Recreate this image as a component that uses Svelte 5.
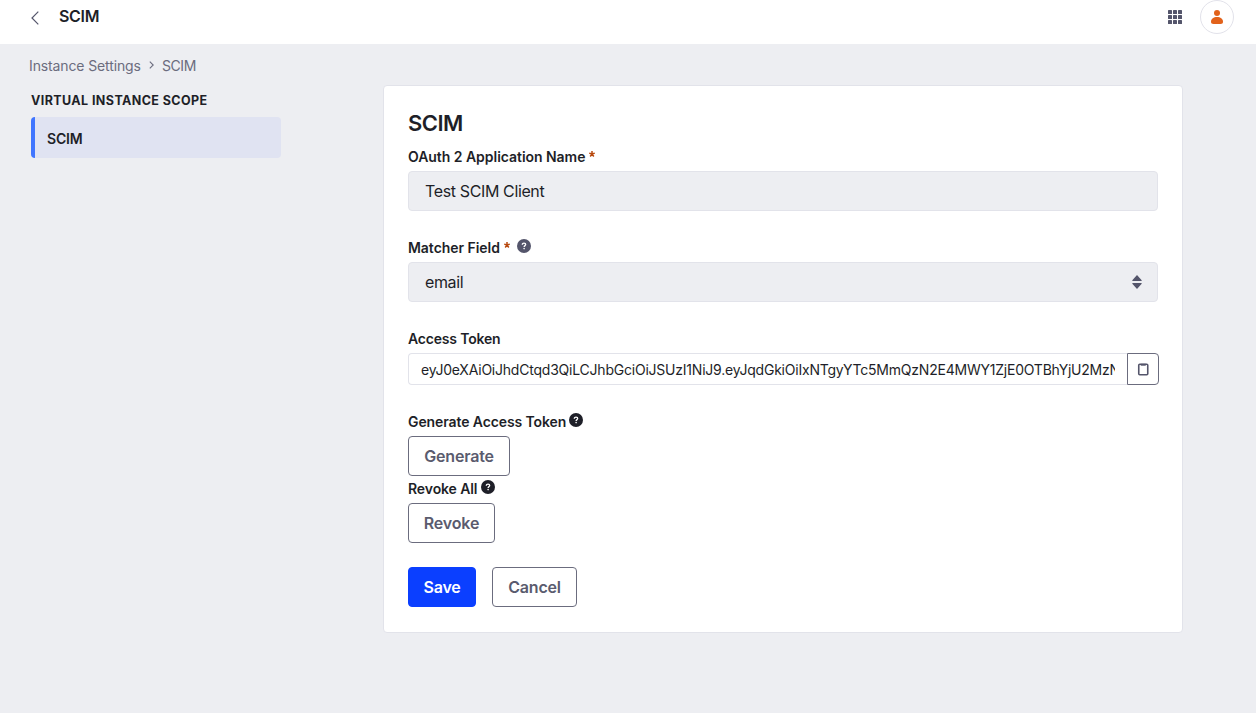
<script>
  const token = 'eyJ0eXAiOiJhdCtqd3QiLCJhbGciOiJSUzI1NiJ9.eyJqdGkiOiIxNTgyYTc5MmQzN2E4MWY1ZjE0OTBhYjU2MzNh';
  const cells = [0, 5, 10];
</script>

{#snippet help()}
  <svg class="help" viewBox="0 0 14 14" aria-hidden="true">
    <circle cx="7" cy="7" r="7" fill="currentColor" />
    <path d="M5.300 5.700C5.300 4.600 6 4.200 7 4.200s1.700.5 1.700 1.300C8.700 6.700 7.100 6.600 7.100 8" fill="none" stroke="#fff" stroke-width="1.300" />
    <circle cx="7.1" cy="9.6" r=".8" fill="#fff" />
  </svg>
{/snippet}

{#snippet star()}
  <svg class="star" viewBox="0 0 6 6" aria-hidden="true">
    <path d="M3 0v3M.2 2.100 3 3l2.800-.9M1.200 5.500 3 3l1.800 2.500" fill="none" stroke="#b84a10" stroke-width="1.5" />
  </svg>
{/snippet}

<div class="page">
  <header>
    <svg class="back" viewBox="0 0 8 14"><path d="M7.300.7 1 7l6.300 6.300" fill="none" stroke="#54556b" stroke-width="1.2" /></svg>
    <h1>SCIM</h1>
    <svg class="apps" viewBox="0 0 14 14">
      {#each cells as y}
        {#each cells as x}
          <rect {x} {y} width="4" height="4" rx=".6" fill="#54556b" />
        {/each}
      {/each}
    </svg>
    <div class="avatar">
      <svg viewBox="0 0 12 14"><circle cx="6" cy="3" r="3" fill="#e2621b" /><path d="M0 11.500C0 8.900 2.600 7 6 7s6 1.900 6 4.500c0 1.800-.8 2.500-2.500 2.500h-7C.8 14 0 13.300 0 11.500Z" fill="#e2621b" /></svg>
    </div>
  </header>

  <nav class="crumbs">
    <span class="crumb">Instance Settings</span>
    <svg viewBox="0 0 5 8"><path d="m.8.6 3.400 3.400L.8 7.400" fill="none" stroke="#6b6c7e" stroke-width="1.100" /></svg>
    <span class="current">SCIM</span>
  </nav>

  <div class="body">
    <aside>
      <h2>VIRTUAL INSTANCE SCOPE</h2>
      <div class="active"><span>SCIM</span></div>
    </aside>

    <main>
      <h3>SCIM</h3>
      <div class="label"><span class="l-app">OAuth 2 Application Name</span>{@render star()}</div>
      <div class="field"><span>Test SCIM Client</span></div>

      <div class="label spaced"><span class="l-match">Matcher Field</span>{@render star()}<span class="muted">{@render help()}</span></div>
      <div class="field select">
        <span>email</span>
        <svg viewBox="0 0 10 14"><path d="M5 0 .3 5.300q-.3.700.5.700h8.400q.8 0 .5-.7ZM5 14 .3 8.700Q0 8 .8 8h8.400q.8 0 .5.700Z" fill="#54556b" /></svg>
      </div>

      <div class="label spaced"><span class="l-token">Access Token</span></div>
      <div class="token">
        <div class="value"><span>{token}</span></div>
        <button class="copy" aria-label="Copy">
          <svg viewBox="0 0 12 13"><rect x="1.750" y="1.250" width="9" height="10.500" rx="1" fill="none" stroke="#54556b" stroke-width="1.600" /><path d="M3.750.8h5v1.900h-5Z" fill="#54556b" /></svg>
        </button>
      </div>

      <div class="label spaced"><span class="l-gen">Generate Access Token</span>{@render help()}</div>
      <button class="btn generate">Generate</button>
      <div class="label tight"><span class="l-rev">Revoke All</span>{@render help()}</div>
      <button class="btn revoke">Revoke</button>

      <div class="actions">
        <button class="btn save">Save</button>
        <button class="btn cancel">Cancel</button>
      </div>
    </main>
  </div>
</div>

<style>
  :global(body) { background: #edeef2; }
  * { box-sizing: border-box; }
  .page { height: 713px; overflow: hidden; background: #edeef2; color: #1e1f28; font-family: Inter, sans-serif; font-size: 14px; }
  svg { display: block; flex: none; }
  h1, h2, h3 { margin: 0; }
  span { white-space: nowrap; }
  header { height: 44px; display: flex; align-items: flex-start; background: #fff; padding: 0 22px 0 31px; }
  .back { width: 8px; height: 14px; margin-top: 11px; }
  h1 { margin-left: 20px; line-height: 33px; font-size: 16px; font-weight: 600; letter-spacing: -.3px; flex: 1; }
  .apps { width: 14px; height: 14px; margin: 10px 18px 0 0; }
  .avatar { width: 34px; height: 34px; border: 1px solid #e2e2ea; border-radius: 50%; display: flex; align-items: center; justify-content: center; }
  .avatar svg { width: 12px; height: 14px; }
  .crumbs { display: flex; align-items: center; height: 41px; padding: 2px 0 0 29px; color: #6b6c7e; }
  .crumbs svg { width: 5px; height: 8px; margin: -2px 8px 0 8px; }
  .crumb { letter-spacing: -.12px; }
  .current { letter-spacing: -.4px; }
  .body { display: flex; align-items: flex-start; padding-left: 31px; }
  aside { width: 250px; padding-top: 6px; }
  h2 { font-size: 12.5px; font-weight: 700; line-height: 20px; letter-spacing: .41px; margin-bottom: 6px; white-space: nowrap; }
  .active { height: 41px; border-left: 4px solid #4075ff; border-radius: 4px; background: #e0e3f2; padding-left: 12px; line-height: 43px; font-weight: 600; letter-spacing: -.15px; }
  main { width: 800px; height: 548px; margin-left: 102px; background: #fff; border: 1px solid #e2e3ea; border-radius: 4px; padding: 23px 24px 24px; }
  h3 { font-size: 22px; line-height: 28px; font-weight: 600; letter-spacing: -.5px; }
  .label { height: 21px; margin: 9px 0 4px; display: flex; align-items: center; font-weight: 600; line-height: 21px; }
  .label.spaced { margin-top: 26px; }
  .label.tight { margin-top: 2px; }
  .l-app, .l-match { letter-spacing: -.04px; }
  .l-token { letter-spacing: -.18px; }
  .l-gen, .l-rev { letter-spacing: -.1px; }
  .star { width: 6px; height: 6px; margin: -5px 0 0 4px; }
  .help { width: 14px; height: 14px; margin: -4px 0 0 3px; }
  .tight .help { margin-left: 4px; }
  .muted { color: #54556b; margin-left: 4px; }
  .field { height: 40px; display: flex; align-items: center; padding: 0 15px 0 16px; border: 1px solid #e2e3ea; border-radius: 4px; background: #edeef2; font-size: 16px; letter-spacing: -.37px; }
  .select { justify-content: space-between; }
  .select svg { width: 10px; height: 14px; }
  .token { height: 32px; width: 751px; display: flex; }
  .value { flex: 1; min-width: 0; border: 1px solid #e2e3ea; border-right: 0; border-radius: 4px 0 0 4px; padding: 0 12px; line-height: 32px; letter-spacing: -.22px; }
  .value span { display: block; overflow: hidden; }
  button { font-family: inherit; margin: 0; background: #fff; border: 1px solid #6b6c7e; color: #5a5b6e; border-radius: 4px; }
  .copy { width: 32px; height: 32px; border-radius: 0 4px 4px 0; padding: 0; display: flex; align-items: center; justify-content: center; }
  .copy svg { width: 12px; height: 13px; }
  .btn { display: block; height: 40px; padding: 0; font-size: 16px; font-weight: 600; line-height: 38px; letter-spacing: -.17px; }
  .generate { width: 102px; }
  .revoke { width: 87px; }
  .actions { display: flex; gap: 16px; margin-top: 24px; }
  .save { width: 68px; background: #0b3fff; border-color: #0b3fff; color: #fff; }
  .cancel { width: 85px; }
</style>
